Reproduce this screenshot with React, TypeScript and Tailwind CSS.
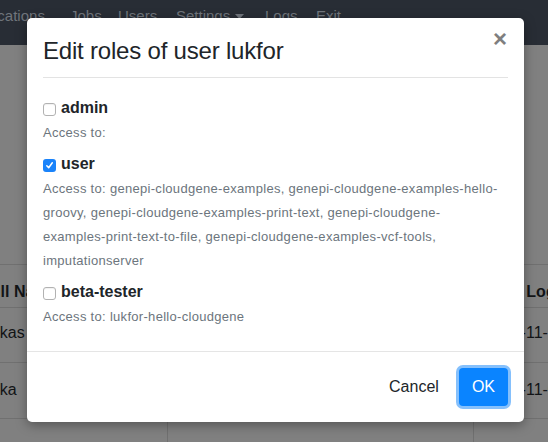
import React from "react";

const navItems = [
  { label: "Applications", w: "w-[106px]" },
  { label: "Jobs", w: "w-[48px]" },
  { label: "Users", w: "w-[58px]" },
  { label: "Settings", w: "w-[89px]", caret: true },
  { label: "Logs", w: "w-[51px]" },
  { label: "Exit", w: "w-[60px]" },
];

const roles = [
  { name: "admin", checked: false, access: ["Access to:"] },
  {
    name: "user",
    checked: true,
    access: [
      "Access to: genepi-cloudgene-examples, genepi-cloudgene-examples-hello-",
      "groovy, genepi-cloudgene-examples-print-text, genepi-cloudgene-",
      "examples-print-text-to-file, genepi-cloudgene-examples-vcf-tools,",
      "imputationserver",
    ],
  },
  { name: "beta-tester", checked: false, access: ["Access to: lukfor-hello-cloudgene"] },
];

const users = [
  { name: "Lukas", login: "2018-11-14", h: "h-[55px] pb-[5px]" },
  { name: "Luka", login: "2018-11-08", h: "h-[56px] pb-[2px]" },
];

const Checkbox = ({ checked }: { checked: boolean }) =>
  checked ? (
    <span className="flex h-[13px] w-[13px] shrink-0 items-center justify-center rounded-[3px] bg-[#1a83fa]">
      <svg width="9" height="9" viewBox="0 0 9 9" fill="none">
        <path d="M1.8 4.8 L3.7 6.8 L7.3 1.8" stroke="white" strokeWidth="1.5" strokeLinecap="round" strokeLinejoin="round" />
      </svg>
    </span>
  ) : (
    <span className="h-[13px] w-[13px] shrink-0 rounded-[3px] border border-[#b2b2b2] bg-white shadow-[inset_0_1px_1px_rgba(0,0,0,0.06)]" />
  );

const App = () => {
  return (
    <div className="relative h-[442px] w-[548px] overflow-hidden bg-[#808080] font-['Liberation_Sans',Arial,sans-serif]">
      {/* page behind the backdrop */}
      <nav className="flex h-[45px] items-start bg-[#282d35] pt-[6px] text-[15px] leading-5 text-[#70757c]">
        <div className="ml-[-36px] flex">
          {navItems.map((item) => (
            <span key={item.label} className={`${item.w} flex shrink-0 items-center whitespace-nowrap`}>
              {item.label}
              {item.caret && (
                <svg className="ml-[5px] mt-[1px]" width="9" height="5" viewBox="0 0 9 5">
                  <path d="M0 0 H9 L4.5 5 Z" fill="#70757c" />
                </svg>
              )}
            </span>
          ))}
        </div>
      </nav>

      <div className="mt-[219px] text-[16px] text-[#121416]">
        <div className="flex h-[44px] items-end border-y border-[#707070] pb-[3px] font-bold leading-6">
          <div className="w-[168px] shrink-0 whitespace-nowrap">
            <span className="ml-[-19px]">Full Name</span>
          </div>
          <div className="w-[306px] shrink-0" />
          <div className="shrink-0 whitespace-nowrap pl-[15px]">Last Login</div>
        </div>
        {users.map((u) => (
          <div key={u.name} className={`flex items-center border-b border-[#707070] leading-6 ${u.h}`}>
            <div className="w-[168px] shrink-0 whitespace-nowrap">
              <span className="ml-[-18px]">{u.name}</span>
            </div>
            <div className="w-[306px] shrink-0" />
            <div className="shrink-0 whitespace-nowrap pl-[11px]">{u.login}</div>
          </div>
        ))}
        <div className="flex h-[30px]">
          <div className="w-[168px] shrink-0 border-r border-[#707070]" />
          <div className="w-[306px] shrink-0 border-r border-[#707070]" />
        </div>
      </div>

      {/* modal */}
      <div className="absolute left-[27px] top-[18px] flex h-[404px] w-[497px] flex-col rounded-[5px] bg-white shadow-[0_3px_12px_rgba(0,0,0,0.35)]">
        <div className="mx-4 flex items-start justify-between border-b border-[#e3e3e3] pt-[18px] pb-[12px]">
          <h4 className="text-[24px] leading-[29px] tracking-[-0.2px] text-[#212529]">Edit roles of user lukfor</h4>
          <span className="mr-[1px] mt-[-12px] text-[24px] font-bold leading-[29px] text-[#7f7f7f]">×</span>
        </div>

        <div className="flex-1 px-4 pt-[19px]">
          {roles.map((role) => (
            <div key={role.name} className="mb-2">
              <label className="flex h-6 items-center gap-[5px]">
                <Checkbox checked={role.checked} />
                <span className="mt-[-2px] text-[16px] font-bold text-[#212529]">{role.name}</span>
              </label>
              <div className="text-[13px] leading-6 tracking-[0.3px] text-[#6c757d]">
                {role.access.map((line) => (
                  <div key={line} className="whitespace-nowrap">
                    {line}
                  </div>
                ))}
              </div>
            </div>
          ))}
        </div>

        <div className="flex items-center justify-end gap-2 border-t border-[#e5e5e5] p-4">
          <button className="h-[38px] px-3 text-[16px] text-[#212529]">Cancel</button>
          <button className="h-[38px] rounded-[4px] bg-[#0a84ff] px-[13px] text-[16px] text-white shadow-[0_0_0_3px_#85c0fc]">
            OK
          </button>
        </div>
      </div>
    </div>
  );
};

export default App;
